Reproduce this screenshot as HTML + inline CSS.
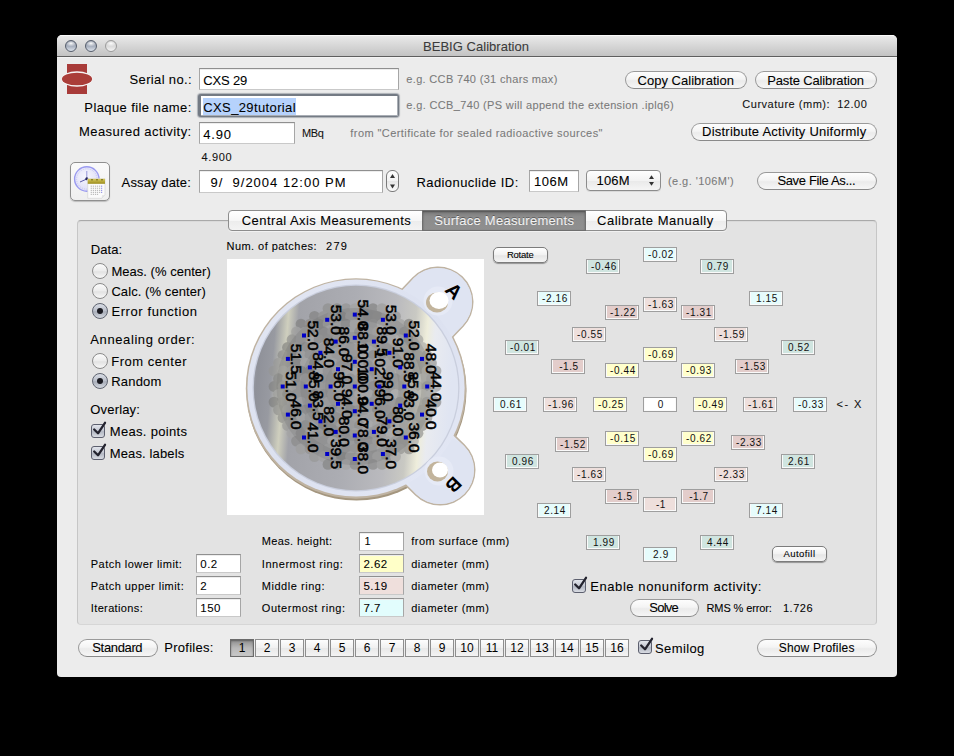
<!DOCTYPE html><html><head><meta charset="utf-8"><style>
body{margin:0;background:#000;width:954px;height:756px;overflow:hidden;position:relative;font-family:"Liberation Sans",sans-serif;}
span{font-family:"Liberation Sans",sans-serif;-webkit-text-stroke:0.08px currentColor;}
.tf{position:absolute;box-sizing:border-box;background:#fff;border:1px solid #a6a6a6;border-top-color:#8f8f8f;border-bottom-color:#c9c9c9;box-shadow:inset 0 1px 0 #ededed;}
.btn{position:absolute;box-sizing:border-box;border:1px solid #9a9a9a;border-bottom-color:#8a8a8a;border-radius:9px;background:linear-gradient(#fdfdfd,#f4f4f4 45%,#ebebeb 55%,#f6f6f6);}
.sbtn{position:absolute;box-sizing:border-box;border:1px solid #7c7c7c;border-radius:5px;background:linear-gradient(#ffffff,#f1f1f1 50%,#e6e6e6 55%,#f4f4f4);box-shadow:0 1px 1px rgba(0,0,0,.35);}
.lb{position:absolute;box-sizing:border-box;width:34px;height:15px;border:1px solid #9e9e9e;box-shadow:inset 1px 0 0 #fafafa,inset -1px -1px 0 #fafafa;font-size:10px;line-height:14px;text-align:center;color:#111;letter-spacing:0.6px;text-indent:1.9px}
.pb{position:absolute;box-sizing:border-box;width:24px;height:18px;top:639px;border:1px solid #8e8e8e;background:linear-gradient(#fdfdfd,#f0f0f0 50%,#e8e8e8 51%,#f4f4f4);font-size:12px;line-height:16px;text-align:center;color:#000}
.rad{position:absolute;box-sizing:border-box;width:16px;height:16px;border-radius:50%;border:1px solid #8a8a8a;background:linear-gradient(#fbfbfb,#ececec 50%,#e2e2e2 55%,#f7f7f7)}
.rads{position:absolute;box-sizing:border-box;width:16px;height:16px;border-radius:50%;border:1px solid #5f6470;background:linear-gradient(#d9dde5,#b9bec9 50%,#a9aeb9 55%,#d3d7df)}
.cb{position:absolute;box-sizing:border-box;width:14px;height:14px;border-radius:3px;border:1px solid #5c5f6e;background:linear-gradient(#e2e5ec,#c3c7d1 50%,#b3b8c3 55%,#d9dce3)}
</style></head><body><div style="position:absolute;left:57px;top:35px;width:840px;height:642px;background:#ececec;border-radius:5px 5px 4px 4px;overflow:hidden"><div style="position:absolute;left:0;top:0;width:840px;height:21px;background:linear-gradient(#e9e9e9,#d6d6d6 50%,#c3c3c3);border-top:1px solid #fbfbfb;box-sizing:border-box"></div><div style="position:absolute;left:0;top:21px;width:840px;height:1px;background:#5e5e5e"></div><div style="position:absolute;left:0;top:22px;width:840px;height:1px;background:#f4f4f4"></div></div>
<div style="position:absolute;left:65px;top:40px;width:12px;height:12px;border-radius:50%;background:radial-gradient(ellipse 55% 32% at 50% 24%, rgba(255,255,255,.95), rgba(255,255,255,0)), linear-gradient(#7f8898, #aab2c0 55%, #dde3ec);border:1px solid #565e6c;box-sizing:border-box"></div>
<div style="position:absolute;left:85px;top:40px;width:12px;height:12px;border-radius:50%;background:radial-gradient(ellipse 55% 32% at 50% 24%, rgba(255,255,255,.95), rgba(255,255,255,0)), linear-gradient(#7f8898, #aab2c0 55%, #dde3ec);border:1px solid #565e6c;box-sizing:border-box"></div>
<div style="position:absolute;left:105px;top:40px;width:12px;height:12px;border-radius:50%;background:radial-gradient(ellipse 55% 32% at 50% 24%, rgba(255,255,255,.95), rgba(255,255,255,0)), linear-gradient(#c4c4c4, #dcdcdc 55%, #f4f4f4);border:1px solid #9c9c9c;box-sizing:border-box"></div>
<span id="t0" style="position:absolute;top:39.60px;font-size:13px;line-height:13px;white-space:pre;color:#3b3b3b;letter-spacing:0.031px;left:423px;">BEBIG Calibration</span>
<svg style="position:absolute;left:57px;top:60px" width="40" height="40"><rect x="10" y="4" width="20" height="30" fill="#a83b39"/><ellipse cx="20" cy="19" rx="15.6" ry="7.8" fill="#f6f6f6"/><ellipse cx="20" cy="19" rx="15.1" ry="6.3" fill="#aa3d39"/></svg>
<span id="t1" style="position:absolute;top:72.90px;font-size:13px;line-height:13px;white-space:pre;color:#000;letter-spacing:0.345px;left:129.6px;">Serial no.:</span>
<span id="t2" style="position:absolute;top:100.60px;font-size:13px;line-height:13px;white-space:pre;color:#000;letter-spacing:0.409px;left:84.3px;">Plaque file name:</span>
<span id="t3" style="position:absolute;top:124.70px;font-size:13px;line-height:13px;white-space:pre;color:#000;letter-spacing:0.437px;left:79px;">Measured activity:</span>
<div class="tf" style="left:199px;top:68px;width:200px;height:22px"></div>
<span id="t4" style="position:absolute;top:74.20px;font-size:13px;line-height:13px;white-space:pre;color:#000;letter-spacing:-0.163px;left:203.3px;">CXS 29</span>
<div style="position:absolute;left:198px;top:94px;width:201px;height:23px;border-radius:3px;background:#737a84;box-shadow:0 0 1px 1px rgba(120,128,138,.55)"></div>
<div style="position:absolute;left:201px;top:96px;width:196px;height:19px;background:#fff;box-shadow:0 0 0.5px 0.5px #a9aeb5"></div>
<div style="position:absolute;left:203px;top:98px;width:93px;height:17px;background:#b6d2fc"></div>
<span id="t5" style="position:absolute;top:101.20px;font-size:13px;line-height:13px;white-space:pre;color:#000;letter-spacing:0.373px;left:203.3px;">CXS_29tutorial</span>
<div class="tf" style="left:199px;top:122px;width:96px;height:22px"></div>
<span id="t6" style="position:absolute;top:128.00px;font-size:13px;line-height:13px;white-space:pre;color:#000;letter-spacing:0.796px;left:203.3px;">4.90</span>
<span id="t7" style="position:absolute;top:127.89px;font-size:11px;line-height:11px;white-space:pre;color:#111;letter-spacing:-0.412px;left:302px;">MBq</span>
<span id="t8" style="position:absolute;top:152.09px;font-size:11px;line-height:11px;white-space:pre;color:#111;letter-spacing:0.642px;left:201.6px;">4.900</span>
<span id="t9" style="position:absolute;top:73.59px;font-size:11px;line-height:11px;white-space:pre;color:#7a7a7a;letter-spacing:0.329px;left:406.3px;">e.g. CCB 740 (31 chars max)</span>
<span id="t10" style="position:absolute;top:100.49px;font-size:11px;line-height:11px;white-space:pre;color:#7a7a7a;letter-spacing:0.353px;left:406.3px;">e.g. CCB_740 (PS will append the extension .iplq6)</span>
<span id="t11" style="position:absolute;top:127.69px;font-size:11px;line-height:11px;white-space:pre;color:#7a7a7a;letter-spacing:0.430px;left:350.3px;">from "Certificate for sealed radioactive sources"</span>
<div class="btn" style="left:625px;top:71px;width:122px;height:18px"></div>
<span id="t12" style="position:absolute;top:73.60px;font-size:13px;line-height:13px;white-space:pre;color:#000;letter-spacing:0.026px;left:637.5px;">Copy Calibration</span>
<div class="btn" style="left:755px;top:71px;width:122px;height:18px"></div>
<span id="t13" style="position:absolute;top:73.60px;font-size:13px;line-height:13px;white-space:pre;color:#000;letter-spacing:-0.138px;left:767.2px;">Paste Calibration</span>
<span id="t14" style="position:absolute;top:98.69px;font-size:11px;line-height:11px;white-space:pre;color:#111;letter-spacing:0.514px;left:742.3px;">Curvature (mm):  12.00</span>
<div class="btn" style="left:691px;top:123px;width:186px;height:18px"></div>
<span id="t15" style="position:absolute;top:125.20px;font-size:13px;line-height:13px;white-space:pre;color:#000;letter-spacing:0.240px;left:702px;">Distribute Activity Uniformly</span>
<div style="position:absolute;left:70px;top:162px;width:40px;height:39px;box-sizing:border-box;border:1px solid #8f8f8f;border-radius:5px;background:linear-gradient(#fafafa,#efefef);box-shadow:0 1px 1px rgba(0,0,0,.2)"><svg width="40" height="39" style="position:absolute;left:-1px;top:-1px"><defs><linearGradient id="calh" x1="0" y1="0" x2="0" y2="1"><stop offset="0" stop-color="#d8cc60"/><stop offset="1" stop-color="#9c8c1c"/></linearGradient><radialGradient id="clf" cx="0.45" cy="0.4" r="0.6"><stop offset="0" stop-color="#f6f6fe"/><stop offset="1" stop-color="#dedef6"/></radialGradient></defs><circle cx="16.8" cy="17" r="12.2" fill="url(#clf)" stroke="#9a9af0" stroke-width="1.4"/><circle cx="16.8" cy="17" r="10.2" fill="none" stroke="#c4c4f4" stroke-width="0.9" stroke-dasharray="1.2 1"/><line x1="16.8" y1="17" x2="16.8" y2="9" stroke="#8c8cd4" stroke-width="0.9"/><line x1="16.8" y1="17" x2="10" y2="20" stroke="#5a5aa8" stroke-width="1"/><circle cx="16.8" cy="16.8" r="1.5" fill="#24245c"/><path d="M17.7 16.8 H35 V33 L31.7 36.3 H17.7 Z" fill="#fbfbfb" stroke="#d0d0d0" stroke-width="0.6"/><path d="M31.7 36.3 L32 33.2 L35 33 Z" fill="#e4e4e4"/><rect x="17.7" y="16.8" width="17.3" height="5" fill="url(#calh)"/><rect x="21" y="17.3" width="2" height="1" fill="#6e6418"/><rect x="26" y="17.3" width="2" height="1" fill="#6e6418"/><rect x="31" y="17.3" width="2" height="1" fill="#6e6418"/><rect x="20.7" y="23.6" width="1.2" height="1.2" fill="#bdbdbd"/><rect x="22.8" y="23.6" width="1.2" height="1.2" fill="#bdbdbd"/><rect x="24.9" y="23.6" width="1.2" height="1.2" fill="#bdbdbd"/><rect x="26.9" y="23.6" width="1.2" height="1.2" fill="#bdbdbd"/><rect x="29.0" y="23.6" width="1.2" height="1.2" fill="#bdbdbd"/><rect x="31.0" y="23.6" width="1.2" height="1.2" fill="#9a9ae8"/><rect x="20.7" y="25.7" width="1.2" height="1.2" fill="#bdbdbd"/><rect x="22.8" y="25.7" width="1.2" height="1.2" fill="#bdbdbd"/><rect x="24.9" y="25.7" width="1.2" height="1.2" fill="#bdbdbd"/><rect x="26.9" y="25.7" width="1.2" height="1.2" fill="#bdbdbd"/><rect x="29.0" y="25.7" width="1.2" height="1.2" fill="#bdbdbd"/><rect x="31.0" y="25.7" width="1.2" height="1.2" fill="#9a9ae8"/><rect x="20.7" y="27.8" width="1.2" height="1.2" fill="#bdbdbd"/><rect x="22.8" y="27.8" width="1.2" height="1.2" fill="#bdbdbd"/><rect x="24.9" y="27.8" width="1.2" height="1.2" fill="#bdbdbd"/><rect x="26.9" y="27.8" width="1.2" height="1.2" fill="#bdbdbd"/><rect x="29.0" y="27.8" width="1.2" height="1.2" fill="#bdbdbd"/><rect x="31.0" y="27.8" width="1.2" height="1.2" fill="#9a9ae8"/><rect x="20.7" y="29.8" width="1.2" height="1.2" fill="#bdbdbd"/><rect x="22.8" y="29.8" width="1.2" height="1.2" fill="#bdbdbd"/><rect x="24.9" y="29.8" width="1.2" height="1.2" fill="#bdbdbd"/><rect x="26.9" y="29.8" width="1.2" height="1.2" fill="#bdbdbd"/><rect x="29.0" y="29.8" width="1.2" height="1.2" fill="#bdbdbd"/><rect x="31.0" y="29.8" width="1.2" height="1.2" fill="#9a9ae8"/><rect x="20.7" y="31.8" width="1.2" height="1.2" fill="#bdbdbd"/><rect x="22.8" y="31.8" width="1.2" height="1.2" fill="#bdbdbd"/><rect x="24.9" y="31.8" width="1.2" height="1.2" fill="#bdbdbd"/><rect x="26.9" y="31.8" width="1.2" height="1.2" fill="#bdbdbd"/></svg></div>
<span id="t16" style="position:absolute;top:176.20px;font-size:13px;line-height:13px;white-space:pre;color:#000;letter-spacing:0.126px;left:121.6px;">Assay date:</span>
<div class="tf" style="left:199px;top:170px;width:184px;height:23px"></div>
<span id="t17" style="position:absolute;top:176.00px;font-size:13px;line-height:13px;white-space:pre;color:#000;letter-spacing:0.995px;left:210.5px;">9/  9/2004 12:00 PM</span>
<div style="position:absolute;left:386px;top:170px;width:13px;height:22px;box-sizing:border-box;border:1px solid #7a7a7a;border-radius:6px;background:linear-gradient(#fdfdfd,#f2f2f2 50%,#e6e6e6 52%,#fafafa)"><svg width="13" height="22" style="position:absolute;left:-1px;top:-1px"><path d="M4 8 L6.5 4 L9 8 Z" fill="#333"/><path d="M4 14.5 L6.5 18.5 L9 14.5 Z" fill="#333"/></svg></div>
<span id="t18" style="position:absolute;top:176.00px;font-size:13px;line-height:13px;white-space:pre;color:#000;letter-spacing:0.434px;left:416.4px;">Radionuclide ID:</span>
<div class="tf" style="left:529px;top:170px;width:50px;height:22px"></div>
<span id="t19" style="position:absolute;top:175.20px;font-size:13px;line-height:13px;white-space:pre;color:#000;letter-spacing:0.556px;left:534px;">106M</span>
<div style="position:absolute;left:586px;top:170px;width:75px;height:21px;box-sizing:border-box;border:1px solid #8c8c8c;border-radius:4px;background:linear-gradient(#fefefe,#f3f3f3 50%,#e9e9e9 52%,#f5f5f5);box-shadow:0 1px 0 rgba(0,0,0,.08)"><svg width="75" height="21" style="position:absolute;left:-1px;top:-1px"><path d="M63 9 L65.5 5.3 L68 9 Z" fill="#333"/><path d="M63 12 L65.5 15.7 L68 12 Z" fill="#333"/></svg></div>
<span id="t20" style="position:absolute;top:174.00px;font-size:13px;line-height:13px;white-space:pre;color:#000;letter-spacing:0.156px;left:596.5px;">106M</span>
<span id="t21" style="position:absolute;top:175.89px;font-size:11px;line-height:11px;white-space:pre;color:#7a7a7a;letter-spacing:0.429px;left:668px;">(e.g. '106M')</span>
<div class="btn" style="left:757px;top:172px;width:120px;height:18px"></div>
<span id="t22" style="position:absolute;top:173.80px;font-size:13px;line-height:13px;white-space:pre;color:#000;letter-spacing:-0.350px;left:777.4px;">Save File As...</span>
<div style="position:absolute;left:77px;top:220px;width:800px;height:405px;box-sizing:border-box;border:1px solid #c6c6c6;border-top-color:#a9a9a9;border-bottom-color:#d6d6d6;border-radius:4px;background:#e3e3e3;box-shadow:inset 0 1px 0 #dadada"></div>
<div style="position:absolute;left:228px;top:210px;width:499px;height:21px;box-sizing:border-box;border:1px solid #8d8d8d;border-radius:4px;background:linear-gradient(#ffffff,#f6f6f6 50%,#ececec 52%,#f3f3f3);box-shadow:0 1px 0 rgba(255,255,255,.5)"></div>
<div style="position:absolute;left:422px;top:210px;width:164px;height:21px;box-sizing:border-box;border:1px solid #6f6f6f;background:linear-gradient(#7a7a7a,#8c8c8c 30%,#8f8f8f);box-shadow:inset 0 1px 2px rgba(0,0,0,.35)"></div>
<span id="t23" style="position:absolute;top:213.60px;font-size:13px;line-height:13px;white-space:pre;color:#000;letter-spacing:0.414px;left:241.8px;">Central Axis Measurements</span>
<span id="t24" style="position:absolute;top:213.90px;font-size:13px;line-height:13px;white-space:pre;color:#f2f2f2;letter-spacing:0.284px;left:434.2px;text-shadow:0 -1px 0 rgba(0,0,0,.35)">Surface Measurements</span>
<span id="t25" style="position:absolute;top:213.60px;font-size:13px;line-height:13px;white-space:pre;color:#000;letter-spacing:0.496px;left:597.1px;">Calibrate Manually</span>
<span id="t26" style="position:absolute;top:242.90px;font-size:13px;line-height:13px;white-space:pre;color:#000;letter-spacing:0.080px;left:90.7px;">Data:</span>
<div class="rad" style="left:92px;top:263px"></div>
<span id="t27" style="position:absolute;top:265.20px;font-size:13px;line-height:13px;white-space:pre;color:#000;letter-spacing:0.028px;left:111.4px;">Meas. (% center)</span>
<div class="rad" style="left:92px;top:283px"></div>
<span id="t28" style="position:absolute;top:285.20px;font-size:13px;line-height:13px;white-space:pre;color:#000;letter-spacing:0.080px;left:111.4px;">Calc. (% center)</span>
<div class="rads" style="left:92px;top:303px"></div>
<div style="position:absolute;left:97px;top:308px;width:6px;height:6px;border-radius:50%;background:#1b1b22"></div>
<span id="t29" style="position:absolute;top:305.20px;font-size:13px;line-height:13px;white-space:pre;color:#000;letter-spacing:0.589px;left:111.4px;">Error function</span>
<span id="t30" style="position:absolute;top:332.80px;font-size:13px;line-height:13px;white-space:pre;color:#000;letter-spacing:0.600px;left:90.3px;">Annealing order:</span>
<div class="rad" style="left:92px;top:353px"></div>
<span id="t31" style="position:absolute;top:355.00px;font-size:13px;line-height:13px;white-space:pre;color:#000;letter-spacing:0.512px;left:111.3px;">From center</span>
<div class="rads" style="left:92px;top:373px"></div>
<div style="position:absolute;left:97px;top:378px;width:6px;height:6px;border-radius:50%;background:#1b1b22"></div>
<span id="t32" style="position:absolute;top:375.00px;font-size:13px;line-height:13px;white-space:pre;color:#000;letter-spacing:0.172px;left:111.3px;">Random</span>
<span id="t33" style="position:absolute;top:402.70px;font-size:13px;line-height:13px;white-space:pre;color:#000;letter-spacing:0.171px;left:90.3px;">Overlay:</span>
<div class="cb" style="left:91px;top:424px"></div>
<svg style="position:absolute;left:88px;top:418px" width="22" height="22"><path d="M6.2 11.5 L10 15.3 L17 4.8" fill="none" stroke="#23232e" stroke-width="2.3" stroke-linecap="round" stroke-linejoin="round"/></svg>
<span id="t34" style="position:absolute;top:424.50px;font-size:13px;line-height:13px;white-space:pre;color:#000;letter-spacing:0.318px;left:109.8px;">Meas. points</span>
<div class="cb" style="left:91px;top:446px"></div>
<svg style="position:absolute;left:88px;top:440px" width="22" height="22"><path d="M6.2 11.5 L10 15.3 L17 4.8" fill="none" stroke="#23232e" stroke-width="2.3" stroke-linecap="round" stroke-linejoin="round"/></svg>
<span id="t35" style="position:absolute;top:446.50px;font-size:13px;line-height:13px;white-space:pre;color:#000;letter-spacing:0.129px;left:109.8px;">Meas. labels</span>
<span id="t36" style="position:absolute;top:240.99px;font-size:11px;line-height:11px;white-space:pre;color:#000;letter-spacing:0.456px;left:226.5px;">Num. of patches:</span>
<span id="t37" style="position:absolute;top:240.99px;font-size:11px;line-height:11px;white-space:pre;color:#000;letter-spacing:1.220px;left:326.1px;">279</span>
<svg style="position:absolute;left:227px;top:259px" width="257" height="256" viewBox="0 0 257 256"><defs><linearGradient id="disc" x1="0" y1="0" x2="1" y2="0.08"><stop offset="0" stop-color="#aaadb9"/><stop offset="0.05" stop-color="#8f9199"/><stop offset="0.12" stop-color="#989aa1"/><stop offset="0.18" stop-color="#cfcfbe"/><stop offset="0.23" stop-color="#a2a3a9"/><stop offset="0.5" stop-color="#acadb3"/><stop offset="0.7" stop-color="#bababe"/><stop offset="0.8" stop-color="#c9c9c3"/><stop offset="0.86" stop-color="#eeeddb"/><stop offset="0.9" stop-color="#e9ebf0"/><stop offset="1" stop-color="#e0e5f2"/></linearGradient><linearGradient id="rim" x1="0" y1="0" x2="1" y2="1"><stop offset="0" stop-color="#e3e7f3"/><stop offset="0.5" stop-color="#dce1f0"/><stop offset="1" stop-color="#e4e8f5"/></linearGradient></defs><rect width="257" height="256" fill="#ffffff"/><circle cx="129.5" cy="131.5" r="110" fill="#a4967f"/><circle cx="129" cy="129.5" r="110.2" fill="#bfb3a2"/><line x1="129" y1="129" x2="211" y2="43" stroke="#bfb3a2" stroke-width="71" stroke-linecap="round"/><line x1="129" y1="129" x2="213" y2="211" stroke="#bfb3a2" stroke-width="71" stroke-linecap="round"/><line x1="129" y1="129" x2="211" y2="43" stroke="url(#rim)" stroke-width="68" stroke-linecap="round"/><line x1="129" y1="129" x2="213" y2="211" stroke="url(#rim)" stroke-width="68" stroke-linecap="round"/><circle cx="211" cy="43" r="34" fill="#dfe4f2"/><circle cx="213" cy="211" r="34" fill="#dfe4f2"/><circle cx="129" cy="129" r="108.6" fill="url(#rim)"/><circle cx="129" cy="129" r="103.5" fill="#c9cedd"/><circle cx="129" cy="129" r="102.2" fill="url(#disc)"/><circle cx="211" cy="42" r="14.5" fill="#e6eaf6"/><ellipse cx="210" cy="43.5" rx="11" ry="10" fill="#c2b49c"/><ellipse cx="212" cy="41.5" rx="9.5" ry="8.5" fill="#ffffff"/><circle cx="212" cy="212" r="14.5" fill="#e6eaf6"/><ellipse cx="210.5" cy="212.5" rx="10.5" ry="10" fill="#c2b49c"/><ellipse cx="213" cy="211" rx="8" ry="7.5" fill="#ffffff"/><text x="0" y="0" transform="translate(227,32) rotate(45)" text-anchor="middle" dominant-baseline="central" font-family="Liberation Sans" font-weight="bold" font-size="20" fill="#000">A</text><text x="0" y="0" transform="translate(226.6,225.6) rotate(135)" text-anchor="middle" dominant-baseline="central" font-family="Liberation Sans" font-weight="bold" font-size="19" fill="#000">B</text><g opacity="0.6"><circle cx="101.0" cy="49.6" r="5.4" fill="rgb(140,140,138)"/><circle cx="110.0" cy="49.6" r="5.4" fill="rgb(129,129,127)"/><circle cx="119.0" cy="49.6" r="5.4" fill="rgb(145,145,143)"/><circle cx="128.0" cy="49.6" r="5.4" fill="rgb(161,161,159)"/><circle cx="137.0" cy="49.6" r="5.4" fill="rgb(123,123,121)"/><circle cx="146.0" cy="49.6" r="5.4" fill="rgb(124,124,122)"/><circle cx="155.0" cy="49.6" r="5.4" fill="rgb(154,154,152)"/><circle cx="87.5" cy="57.4" r="5.4" fill="rgb(126,126,124)"/><circle cx="96.5" cy="57.4" r="5.4" fill="rgb(143,143,141)"/><circle cx="105.5" cy="57.4" r="5.4" fill="rgb(157,157,155)"/><circle cx="114.5" cy="57.4" r="5.4" fill="rgb(123,123,121)"/><circle cx="123.5" cy="57.4" r="5.4" fill="rgb(152,152,150)"/><circle cx="132.5" cy="57.4" r="5.4" fill="rgb(133,133,131)"/><circle cx="141.5" cy="57.4" r="5.4" fill="rgb(122,122,120)"/><circle cx="150.5" cy="57.4" r="5.4" fill="rgb(125,125,123)"/><circle cx="159.5" cy="57.4" r="5.4" fill="rgb(147,147,145)"/><circle cx="168.5" cy="57.4" r="5.4" fill="rgb(146,146,144)"/><circle cx="74.0" cy="65.1" r="5.4" fill="rgb(124,124,122)"/><circle cx="83.0" cy="65.1" r="5.4" fill="rgb(135,135,133)"/><circle cx="92.0" cy="65.1" r="5.4" fill="rgb(125,125,123)"/><circle cx="101.0" cy="65.1" r="5.4" fill="rgb(155,155,153)"/><circle cx="110.0" cy="65.1" r="5.4" fill="rgb(147,147,145)"/><circle cx="119.0" cy="65.1" r="5.4" fill="rgb(123,123,121)"/><circle cx="128.0" cy="65.1" r="5.4" fill="rgb(156,156,154)"/><circle cx="137.0" cy="65.1" r="5.4" fill="rgb(127,127,125)"/><circle cx="146.0" cy="65.1" r="5.4" fill="rgb(134,134,132)"/><circle cx="155.0" cy="65.1" r="5.4" fill="rgb(160,160,158)"/><circle cx="164.0" cy="65.1" r="5.4" fill="rgb(160,160,158)"/><circle cx="173.0" cy="65.1" r="5.4" fill="rgb(157,157,155)"/><circle cx="182.0" cy="65.1" r="5.4" fill="rgb(123,123,121)"/><circle cx="69.5" cy="72.9" r="5.4" fill="rgb(156,156,154)"/><circle cx="78.5" cy="72.9" r="5.4" fill="rgb(157,157,155)"/><circle cx="87.5" cy="72.9" r="5.4" fill="rgb(145,145,143)"/><circle cx="96.5" cy="72.9" r="5.4" fill="rgb(123,123,121)"/><circle cx="105.5" cy="72.9" r="5.4" fill="rgb(134,134,132)"/><circle cx="114.5" cy="72.9" r="5.4" fill="rgb(122,122,120)"/><circle cx="123.5" cy="72.9" r="5.4" fill="rgb(155,155,153)"/><circle cx="132.5" cy="72.9" r="5.4" fill="rgb(128,128,126)"/><circle cx="141.5" cy="72.9" r="5.4" fill="rgb(138,138,136)"/><circle cx="150.5" cy="72.9" r="5.4" fill="rgb(146,146,144)"/><circle cx="159.5" cy="72.9" r="5.4" fill="rgb(129,129,127)"/><circle cx="168.5" cy="72.9" r="5.4" fill="rgb(154,154,152)"/><circle cx="177.5" cy="72.9" r="5.4" fill="rgb(127,127,125)"/><circle cx="186.5" cy="72.9" r="5.4" fill="rgb(156,156,154)"/><circle cx="65.0" cy="80.7" r="5.4" fill="rgb(139,139,137)"/><circle cx="74.0" cy="80.7" r="5.4" fill="rgb(155,155,153)"/><circle cx="83.0" cy="80.7" r="5.4" fill="rgb(163,163,161)"/><circle cx="92.0" cy="80.7" r="5.4" fill="rgb(131,131,129)"/><circle cx="101.0" cy="80.7" r="5.4" fill="rgb(126,126,124)"/><circle cx="110.0" cy="80.7" r="5.4" fill="rgb(157,157,155)"/><circle cx="119.0" cy="80.7" r="5.4" fill="rgb(156,156,154)"/><circle cx="128.0" cy="80.7" r="5.4" fill="rgb(160,160,158)"/><circle cx="137.0" cy="80.7" r="5.4" fill="rgb(132,132,130)"/><circle cx="146.0" cy="80.7" r="5.4" fill="rgb(143,143,141)"/><circle cx="155.0" cy="80.7" r="5.4" fill="rgb(126,126,124)"/><circle cx="164.0" cy="80.7" r="5.4" fill="rgb(155,155,153)"/><circle cx="173.0" cy="80.7" r="5.4" fill="rgb(165,165,163)"/><circle cx="182.0" cy="80.7" r="5.4" fill="rgb(124,124,122)"/><circle cx="191.0" cy="80.7" r="5.4" fill="rgb(156,156,154)"/><circle cx="60.5" cy="88.5" r="5.4" fill="rgb(123,123,121)"/><circle cx="69.5" cy="88.5" r="5.4" fill="rgb(159,159,157)"/><circle cx="78.5" cy="88.5" r="5.4" fill="rgb(133,133,131)"/><circle cx="87.5" cy="88.5" r="5.4" fill="rgb(151,151,149)"/><circle cx="96.5" cy="88.5" r="5.4" fill="rgb(163,163,161)"/><circle cx="105.5" cy="88.5" r="5.4" fill="rgb(154,154,152)"/><circle cx="114.5" cy="88.5" r="5.4" fill="rgb(147,147,145)"/><circle cx="123.5" cy="88.5" r="5.4" fill="rgb(140,140,138)"/><circle cx="132.5" cy="88.5" r="5.4" fill="rgb(149,149,147)"/><circle cx="141.5" cy="88.5" r="5.4" fill="rgb(157,157,155)"/><circle cx="150.5" cy="88.5" r="5.4" fill="rgb(149,149,147)"/><circle cx="159.5" cy="88.5" r="5.4" fill="rgb(143,143,141)"/><circle cx="168.5" cy="88.5" r="5.4" fill="rgb(139,139,137)"/><circle cx="177.5" cy="88.5" r="5.4" fill="rgb(135,135,133)"/><circle cx="186.5" cy="88.5" r="5.4" fill="rgb(131,131,129)"/><circle cx="195.5" cy="88.5" r="5.4" fill="rgb(164,164,162)"/><circle cx="56.0" cy="96.3" r="5.4" fill="rgb(135,135,133)"/><circle cx="65.0" cy="96.3" r="5.4" fill="rgb(125,125,123)"/><circle cx="74.0" cy="96.3" r="5.4" fill="rgb(156,156,154)"/><circle cx="83.0" cy="96.3" r="5.4" fill="rgb(139,139,137)"/><circle cx="92.0" cy="96.3" r="5.4" fill="rgb(153,153,151)"/><circle cx="101.0" cy="96.3" r="5.4" fill="rgb(151,151,149)"/><circle cx="110.0" cy="96.3" r="5.4" fill="rgb(141,141,139)"/><circle cx="119.0" cy="96.3" r="5.4" fill="rgb(148,148,146)"/><circle cx="128.0" cy="96.3" r="5.4" fill="rgb(138,138,136)"/><circle cx="137.0" cy="96.3" r="5.4" fill="rgb(158,158,156)"/><circle cx="146.0" cy="96.3" r="5.4" fill="rgb(124,124,122)"/><circle cx="155.0" cy="96.3" r="5.4" fill="rgb(127,127,125)"/><circle cx="164.0" cy="96.3" r="5.4" fill="rgb(152,152,150)"/><circle cx="173.0" cy="96.3" r="5.4" fill="rgb(146,146,144)"/><circle cx="182.0" cy="96.3" r="5.4" fill="rgb(130,130,128)"/><circle cx="191.0" cy="96.3" r="5.4" fill="rgb(141,141,139)"/><circle cx="200.0" cy="96.3" r="5.4" fill="rgb(129,129,127)"/><circle cx="51.5" cy="104.1" r="5.4" fill="rgb(151,151,149)"/><circle cx="60.5" cy="104.1" r="5.4" fill="rgb(146,146,144)"/><circle cx="69.5" cy="104.1" r="5.4" fill="rgb(122,122,120)"/><circle cx="78.5" cy="104.1" r="5.4" fill="rgb(162,162,160)"/><circle cx="87.5" cy="104.1" r="5.4" fill="rgb(124,124,122)"/><circle cx="96.5" cy="104.1" r="5.4" fill="rgb(155,155,153)"/><circle cx="105.5" cy="104.1" r="5.4" fill="rgb(156,156,154)"/><circle cx="114.5" cy="104.1" r="5.4" fill="rgb(140,140,138)"/><circle cx="123.5" cy="104.1" r="5.4" fill="rgb(141,141,139)"/><circle cx="132.5" cy="104.1" r="5.4" fill="rgb(164,164,162)"/><circle cx="141.5" cy="104.1" r="5.4" fill="rgb(142,142,140)"/><circle cx="150.5" cy="104.1" r="5.4" fill="rgb(158,158,156)"/><circle cx="159.5" cy="104.1" r="5.4" fill="rgb(151,151,149)"/><circle cx="168.5" cy="104.1" r="5.4" fill="rgb(157,157,155)"/><circle cx="177.5" cy="104.1" r="5.4" fill="rgb(149,149,147)"/><circle cx="186.5" cy="104.1" r="5.4" fill="rgb(124,124,122)"/><circle cx="195.5" cy="104.1" r="5.4" fill="rgb(125,125,123)"/><circle cx="204.5" cy="104.1" r="5.4" fill="rgb(137,137,135)"/><circle cx="47.0" cy="111.9" r="5.4" fill="rgb(150,150,148)"/><circle cx="56.0" cy="111.9" r="5.4" fill="rgb(164,164,162)"/><circle cx="65.0" cy="111.9" r="5.4" fill="rgb(162,162,160)"/><circle cx="74.0" cy="111.9" r="5.4" fill="rgb(124,124,122)"/><circle cx="83.0" cy="111.9" r="5.4" fill="rgb(123,123,121)"/><circle cx="92.0" cy="111.9" r="5.4" fill="rgb(164,164,162)"/><circle cx="101.0" cy="111.9" r="5.4" fill="rgb(139,139,137)"/><circle cx="110.0" cy="111.9" r="5.4" fill="rgb(161,161,159)"/><circle cx="119.0" cy="111.9" r="5.4" fill="rgb(156,156,154)"/><circle cx="128.0" cy="111.9" r="5.4" fill="rgb(163,163,161)"/><circle cx="137.0" cy="111.9" r="5.4" fill="rgb(148,148,146)"/><circle cx="146.0" cy="111.9" r="5.4" fill="rgb(138,138,136)"/><circle cx="155.0" cy="111.9" r="5.4" fill="rgb(165,165,163)"/><circle cx="164.0" cy="111.9" r="5.4" fill="rgb(144,144,142)"/><circle cx="173.0" cy="111.9" r="5.4" fill="rgb(162,162,160)"/><circle cx="182.0" cy="111.9" r="5.4" fill="rgb(142,142,140)"/><circle cx="191.0" cy="111.9" r="5.4" fill="rgb(121,121,119)"/><circle cx="200.0" cy="111.9" r="5.4" fill="rgb(149,149,147)"/><circle cx="209.0" cy="111.9" r="5.4" fill="rgb(142,142,140)"/><circle cx="51.5" cy="119.7" r="5.4" fill="rgb(130,130,128)"/><circle cx="60.5" cy="119.7" r="5.4" fill="rgb(159,159,157)"/><circle cx="69.5" cy="119.7" r="5.4" fill="rgb(127,127,125)"/><circle cx="78.5" cy="119.7" r="5.4" fill="rgb(151,151,149)"/><circle cx="87.5" cy="119.7" r="5.4" fill="rgb(123,123,121)"/><circle cx="96.5" cy="119.7" r="5.4" fill="rgb(133,133,131)"/><circle cx="105.5" cy="119.7" r="5.4" fill="rgb(138,138,136)"/><circle cx="114.5" cy="119.7" r="5.4" fill="rgb(128,128,126)"/><circle cx="123.5" cy="119.7" r="5.4" fill="rgb(135,135,133)"/><circle cx="132.5" cy="119.7" r="5.4" fill="rgb(145,145,143)"/><circle cx="141.5" cy="119.7" r="5.4" fill="rgb(145,145,143)"/><circle cx="150.5" cy="119.7" r="5.4" fill="rgb(151,151,149)"/><circle cx="159.5" cy="119.7" r="5.4" fill="rgb(125,125,123)"/><circle cx="168.5" cy="119.7" r="5.4" fill="rgb(130,130,128)"/><circle cx="177.5" cy="119.7" r="5.4" fill="rgb(148,148,146)"/><circle cx="186.5" cy="119.7" r="5.4" fill="rgb(145,145,143)"/><circle cx="195.5" cy="119.7" r="5.4" fill="rgb(155,155,153)"/><circle cx="204.5" cy="119.7" r="5.4" fill="rgb(137,137,135)"/><circle cx="47.0" cy="127.5" r="5.4" fill="rgb(128,128,126)"/><circle cx="56.0" cy="127.5" r="5.4" fill="rgb(147,147,145)"/><circle cx="65.0" cy="127.5" r="5.4" fill="rgb(155,155,153)"/><circle cx="74.0" cy="127.5" r="5.4" fill="rgb(137,137,135)"/><circle cx="83.0" cy="127.5" r="5.4" fill="rgb(165,165,163)"/><circle cx="92.0" cy="127.5" r="5.4" fill="rgb(146,146,144)"/><circle cx="101.0" cy="127.5" r="5.4" fill="rgb(142,142,140)"/><circle cx="110.0" cy="127.5" r="5.4" fill="rgb(163,163,161)"/><circle cx="119.0" cy="127.5" r="5.4" fill="rgb(144,144,142)"/><circle cx="128.0" cy="127.5" r="5.4" fill="rgb(134,134,132)"/><circle cx="137.0" cy="127.5" r="5.4" fill="rgb(129,129,127)"/><circle cx="146.0" cy="127.5" r="5.4" fill="rgb(125,125,123)"/><circle cx="155.0" cy="127.5" r="5.4" fill="rgb(131,131,129)"/><circle cx="164.0" cy="127.5" r="5.4" fill="rgb(129,129,127)"/><circle cx="173.0" cy="127.5" r="5.4" fill="rgb(134,134,132)"/><circle cx="182.0" cy="127.5" r="5.4" fill="rgb(162,162,160)"/><circle cx="191.0" cy="127.5" r="5.4" fill="rgb(134,134,132)"/><circle cx="200.0" cy="127.5" r="5.4" fill="rgb(120,120,118)"/><circle cx="209.0" cy="127.5" r="5.4" fill="rgb(151,151,149)"/><circle cx="51.5" cy="135.3" r="5.4" fill="rgb(157,157,155)"/><circle cx="60.5" cy="135.3" r="5.4" fill="rgb(131,131,129)"/><circle cx="69.5" cy="135.3" r="5.4" fill="rgb(136,136,134)"/><circle cx="78.5" cy="135.3" r="5.4" fill="rgb(138,138,136)"/><circle cx="87.5" cy="135.3" r="5.4" fill="rgb(120,120,118)"/><circle cx="96.5" cy="135.3" r="5.4" fill="rgb(129,129,127)"/><circle cx="105.5" cy="135.3" r="5.4" fill="rgb(146,146,144)"/><circle cx="114.5" cy="135.3" r="5.4" fill="rgb(154,154,152)"/><circle cx="123.5" cy="135.3" r="5.4" fill="rgb(143,143,141)"/><circle cx="132.5" cy="135.3" r="5.4" fill="rgb(159,159,157)"/><circle cx="141.5" cy="135.3" r="5.4" fill="rgb(156,156,154)"/><circle cx="150.5" cy="135.3" r="5.4" fill="rgb(140,140,138)"/><circle cx="159.5" cy="135.3" r="5.4" fill="rgb(128,128,126)"/><circle cx="168.5" cy="135.3" r="5.4" fill="rgb(164,164,162)"/><circle cx="177.5" cy="135.3" r="5.4" fill="rgb(152,152,150)"/><circle cx="186.5" cy="135.3" r="5.4" fill="rgb(159,159,157)"/><circle cx="195.5" cy="135.3" r="5.4" fill="rgb(161,161,159)"/><circle cx="204.5" cy="135.3" r="5.4" fill="rgb(163,163,161)"/><circle cx="47.0" cy="143.1" r="5.4" fill="rgb(123,123,121)"/><circle cx="56.0" cy="143.1" r="5.4" fill="rgb(149,149,147)"/><circle cx="65.0" cy="143.1" r="5.4" fill="rgb(163,163,161)"/><circle cx="74.0" cy="143.1" r="5.4" fill="rgb(155,155,153)"/><circle cx="83.0" cy="143.1" r="5.4" fill="rgb(145,145,143)"/><circle cx="92.0" cy="143.1" r="5.4" fill="rgb(145,145,143)"/><circle cx="101.0" cy="143.1" r="5.4" fill="rgb(145,145,143)"/><circle cx="110.0" cy="143.1" r="5.4" fill="rgb(145,145,143)"/><circle cx="119.0" cy="143.1" r="5.4" fill="rgb(126,126,124)"/><circle cx="128.0" cy="143.1" r="5.4" fill="rgb(150,150,148)"/><circle cx="137.0" cy="143.1" r="5.4" fill="rgb(160,160,158)"/><circle cx="146.0" cy="143.1" r="5.4" fill="rgb(145,145,143)"/><circle cx="155.0" cy="143.1" r="5.4" fill="rgb(123,123,121)"/><circle cx="164.0" cy="143.1" r="5.4" fill="rgb(132,132,130)"/><circle cx="173.0" cy="143.1" r="5.4" fill="rgb(124,124,122)"/><circle cx="182.0" cy="143.1" r="5.4" fill="rgb(133,133,131)"/><circle cx="191.0" cy="143.1" r="5.4" fill="rgb(148,148,146)"/><circle cx="200.0" cy="143.1" r="5.4" fill="rgb(130,130,128)"/><circle cx="209.0" cy="143.1" r="5.4" fill="rgb(127,127,125)"/><circle cx="51.5" cy="150.9" r="5.4" fill="rgb(141,141,139)"/><circle cx="60.5" cy="150.9" r="5.4" fill="rgb(158,158,156)"/><circle cx="69.5" cy="150.9" r="5.4" fill="rgb(123,123,121)"/><circle cx="78.5" cy="150.9" r="5.4" fill="rgb(126,126,124)"/><circle cx="87.5" cy="150.9" r="5.4" fill="rgb(120,120,118)"/><circle cx="96.5" cy="150.9" r="5.4" fill="rgb(156,156,154)"/><circle cx="105.5" cy="150.9" r="5.4" fill="rgb(129,129,127)"/><circle cx="114.5" cy="150.9" r="5.4" fill="rgb(154,154,152)"/><circle cx="123.5" cy="150.9" r="5.4" fill="rgb(126,126,124)"/><circle cx="132.5" cy="150.9" r="5.4" fill="rgb(143,143,141)"/><circle cx="141.5" cy="150.9" r="5.4" fill="rgb(159,159,157)"/><circle cx="150.5" cy="150.9" r="5.4" fill="rgb(121,121,119)"/><circle cx="159.5" cy="150.9" r="5.4" fill="rgb(124,124,122)"/><circle cx="168.5" cy="150.9" r="5.4" fill="rgb(133,133,131)"/><circle cx="177.5" cy="150.9" r="5.4" fill="rgb(159,159,157)"/><circle cx="186.5" cy="150.9" r="5.4" fill="rgb(144,144,142)"/><circle cx="195.5" cy="150.9" r="5.4" fill="rgb(129,129,127)"/><circle cx="204.5" cy="150.9" r="5.4" fill="rgb(160,160,158)"/><circle cx="56.0" cy="158.7" r="5.4" fill="rgb(136,136,134)"/><circle cx="65.0" cy="158.7" r="5.4" fill="rgb(142,142,140)"/><circle cx="74.0" cy="158.7" r="5.4" fill="rgb(158,158,156)"/><circle cx="83.0" cy="158.7" r="5.4" fill="rgb(143,143,141)"/><circle cx="92.0" cy="158.7" r="5.4" fill="rgb(150,150,148)"/><circle cx="101.0" cy="158.7" r="5.4" fill="rgb(127,127,125)"/><circle cx="110.0" cy="158.7" r="5.4" fill="rgb(127,127,125)"/><circle cx="119.0" cy="158.7" r="5.4" fill="rgb(151,151,149)"/><circle cx="128.0" cy="158.7" r="5.4" fill="rgb(149,149,147)"/><circle cx="137.0" cy="158.7" r="5.4" fill="rgb(150,150,148)"/><circle cx="146.0" cy="158.7" r="5.4" fill="rgb(150,150,148)"/><circle cx="155.0" cy="158.7" r="5.4" fill="rgb(139,139,137)"/><circle cx="164.0" cy="158.7" r="5.4" fill="rgb(125,125,123)"/><circle cx="173.0" cy="158.7" r="5.4" fill="rgb(129,129,127)"/><circle cx="182.0" cy="158.7" r="5.4" fill="rgb(126,126,124)"/><circle cx="191.0" cy="158.7" r="5.4" fill="rgb(141,141,139)"/><circle cx="200.0" cy="158.7" r="5.4" fill="rgb(136,136,134)"/><circle cx="60.5" cy="166.5" r="5.4" fill="rgb(150,150,148)"/><circle cx="69.5" cy="166.5" r="5.4" fill="rgb(164,164,162)"/><circle cx="78.5" cy="166.5" r="5.4" fill="rgb(130,130,128)"/><circle cx="87.5" cy="166.5" r="5.4" fill="rgb(153,153,151)"/><circle cx="96.5" cy="166.5" r="5.4" fill="rgb(121,121,119)"/><circle cx="105.5" cy="166.5" r="5.4" fill="rgb(133,133,131)"/><circle cx="114.5" cy="166.5" r="5.4" fill="rgb(153,153,151)"/><circle cx="123.5" cy="166.5" r="5.4" fill="rgb(143,143,141)"/><circle cx="132.5" cy="166.5" r="5.4" fill="rgb(129,129,127)"/><circle cx="141.5" cy="166.5" r="5.4" fill="rgb(164,164,162)"/><circle cx="150.5" cy="166.5" r="5.4" fill="rgb(154,154,152)"/><circle cx="159.5" cy="166.5" r="5.4" fill="rgb(121,121,119)"/><circle cx="168.5" cy="166.5" r="5.4" fill="rgb(153,153,151)"/><circle cx="177.5" cy="166.5" r="5.4" fill="rgb(139,139,137)"/><circle cx="186.5" cy="166.5" r="5.4" fill="rgb(161,161,159)"/><circle cx="195.5" cy="166.5" r="5.4" fill="rgb(125,125,123)"/><circle cx="65.0" cy="174.3" r="5.4" fill="rgb(164,164,162)"/><circle cx="74.0" cy="174.3" r="5.4" fill="rgb(136,136,134)"/><circle cx="83.0" cy="174.3" r="5.4" fill="rgb(153,153,151)"/><circle cx="92.0" cy="174.3" r="5.4" fill="rgb(143,143,141)"/><circle cx="101.0" cy="174.3" r="5.4" fill="rgb(130,130,128)"/><circle cx="110.0" cy="174.3" r="5.4" fill="rgb(142,142,140)"/><circle cx="119.0" cy="174.3" r="5.4" fill="rgb(134,134,132)"/><circle cx="128.0" cy="174.3" r="5.4" fill="rgb(154,154,152)"/><circle cx="137.0" cy="174.3" r="5.4" fill="rgb(154,154,152)"/><circle cx="146.0" cy="174.3" r="5.4" fill="rgb(152,152,150)"/><circle cx="155.0" cy="174.3" r="5.4" fill="rgb(141,141,139)"/><circle cx="164.0" cy="174.3" r="5.4" fill="rgb(160,160,158)"/><circle cx="173.0" cy="174.3" r="5.4" fill="rgb(134,134,132)"/><circle cx="182.0" cy="174.3" r="5.4" fill="rgb(159,159,157)"/><circle cx="191.0" cy="174.3" r="5.4" fill="rgb(132,132,130)"/><circle cx="69.5" cy="182.1" r="5.4" fill="rgb(135,135,133)"/><circle cx="78.5" cy="182.1" r="5.4" fill="rgb(145,145,143)"/><circle cx="87.5" cy="182.1" r="5.4" fill="rgb(134,134,132)"/><circle cx="96.5" cy="182.1" r="5.4" fill="rgb(132,132,130)"/><circle cx="105.5" cy="182.1" r="5.4" fill="rgb(153,153,151)"/><circle cx="114.5" cy="182.1" r="5.4" fill="rgb(151,151,149)"/><circle cx="123.5" cy="182.1" r="5.4" fill="rgb(142,142,140)"/><circle cx="132.5" cy="182.1" r="5.4" fill="rgb(121,121,119)"/><circle cx="141.5" cy="182.1" r="5.4" fill="rgb(121,121,119)"/><circle cx="150.5" cy="182.1" r="5.4" fill="rgb(137,137,135)"/><circle cx="159.5" cy="182.1" r="5.4" fill="rgb(150,150,148)"/><circle cx="168.5" cy="182.1" r="5.4" fill="rgb(136,136,134)"/><circle cx="177.5" cy="182.1" r="5.4" fill="rgb(132,132,130)"/><circle cx="186.5" cy="182.1" r="5.4" fill="rgb(164,164,162)"/><circle cx="74.0" cy="189.9" r="5.4" fill="rgb(158,158,156)"/><circle cx="83.0" cy="189.9" r="5.4" fill="rgb(142,142,140)"/><circle cx="92.0" cy="189.9" r="5.4" fill="rgb(148,148,146)"/><circle cx="101.0" cy="189.9" r="5.4" fill="rgb(142,142,140)"/><circle cx="110.0" cy="189.9" r="5.4" fill="rgb(143,143,141)"/><circle cx="119.0" cy="189.9" r="5.4" fill="rgb(125,125,123)"/><circle cx="128.0" cy="189.9" r="5.4" fill="rgb(134,134,132)"/><circle cx="137.0" cy="189.9" r="5.4" fill="rgb(126,126,124)"/><circle cx="146.0" cy="189.9" r="5.4" fill="rgb(134,134,132)"/><circle cx="155.0" cy="189.9" r="5.4" fill="rgb(150,150,148)"/><circle cx="164.0" cy="189.9" r="5.4" fill="rgb(132,132,130)"/><circle cx="173.0" cy="189.9" r="5.4" fill="rgb(141,141,139)"/><circle cx="182.0" cy="189.9" r="5.4" fill="rgb(133,133,131)"/><circle cx="87.5" cy="197.6" r="5.4" fill="rgb(150,150,148)"/><circle cx="96.5" cy="197.6" r="5.4" fill="rgb(159,159,157)"/><circle cx="105.5" cy="197.6" r="5.4" fill="rgb(159,159,157)"/><circle cx="114.5" cy="197.6" r="5.4" fill="rgb(120,120,118)"/><circle cx="123.5" cy="197.6" r="5.4" fill="rgb(150,150,148)"/><circle cx="132.5" cy="197.6" r="5.4" fill="rgb(161,161,159)"/><circle cx="141.5" cy="197.6" r="5.4" fill="rgb(142,142,140)"/><circle cx="150.5" cy="197.6" r="5.4" fill="rgb(161,161,159)"/><circle cx="159.5" cy="197.6" r="5.4" fill="rgb(125,125,123)"/><circle cx="168.5" cy="197.6" r="5.4" fill="rgb(162,162,160)"/><circle cx="101.0" cy="205.4" r="5.4" fill="rgb(127,127,125)"/><circle cx="110.0" cy="205.4" r="5.4" fill="rgb(144,144,142)"/><circle cx="119.0" cy="205.4" r="5.4" fill="rgb(165,165,163)"/><circle cx="128.0" cy="205.4" r="5.4" fill="rgb(132,132,130)"/><circle cx="137.0" cy="205.4" r="5.4" fill="rgb(150,150,148)"/><circle cx="146.0" cy="205.4" r="5.4" fill="rgb(131,131,129)"/><circle cx="155.0" cy="205.4" r="5.4" fill="rgb(147,147,145)"/></g><circle cx="128" cy="127.5" r="72.5" fill="none" stroke="#6a6a6a" stroke-width="12" opacity="0.22"/><circle cx="128" cy="127.5" r="49" fill="none" stroke="#6a6a6a" stroke-width="11" opacity="0.18"/><circle cx="128" cy="127.5" r="24.5" fill="none" stroke="#6a6a6a" stroke-width="11" opacity="0.15"/><text transform="translate(131.3,55.6) rotate(90)" text-anchor="middle" font-family="Liberation Sans" font-size="15.5" fill="#000" stroke="#000" stroke-width="0.55">54.0</text><text transform="translate(159.4,60.8) rotate(90)" text-anchor="middle" font-family="Liberation Sans" font-size="15.5" fill="#000" stroke="#000" stroke-width="0.55">53.0</text><text transform="translate(182.3,76.5) rotate(90)" text-anchor="middle" font-family="Liberation Sans" font-size="15.5" fill="#000" stroke="#000" stroke-width="0.55">52.0</text><text transform="translate(198.5,99.9) rotate(90)" text-anchor="middle" font-family="Liberation Sans" font-size="15.5" fill="#000" stroke="#000" stroke-width="0.55">48.0</text><text transform="translate(203.7,127.5) rotate(90)" text-anchor="middle" font-family="Liberation Sans" font-size="15.5" fill="#000" stroke="#000" stroke-width="0.55">44.0</text><text transform="translate(198.5,155.6) rotate(90)" text-anchor="middle" font-family="Liberation Sans" font-size="15.5" fill="#000" stroke="#000" stroke-width="0.55">40.0</text><text transform="translate(182.3,178.5) rotate(90)" text-anchor="middle" font-family="Liberation Sans" font-size="15.5" fill="#000" stroke="#000" stroke-width="0.55">36.0</text><text transform="translate(159.4,195.0) rotate(90)" text-anchor="middle" font-family="Liberation Sans" font-size="15.5" fill="#000" stroke="#000" stroke-width="0.55">37.0</text><text transform="translate(131.3,200.0) rotate(90)" text-anchor="middle" font-family="Liberation Sans" font-size="15.5" fill="#000" stroke="#000" stroke-width="0.55">38.0</text><text transform="translate(103.7,195.0) rotate(90)" text-anchor="middle" font-family="Liberation Sans" font-size="15.5" fill="#000" stroke="#000" stroke-width="0.55">39.5</text><text transform="translate(80.5,178.5) rotate(90)" text-anchor="middle" font-family="Liberation Sans" font-size="15.5" fill="#000" stroke="#000" stroke-width="0.55">41.0</text><text transform="translate(64.4,155.6) rotate(90)" text-anchor="middle" font-family="Liberation Sans" font-size="15.5" fill="#000" stroke="#000" stroke-width="0.55">46.0</text><text transform="translate(59.2,127.5) rotate(90)" text-anchor="middle" font-family="Liberation Sans" font-size="15.5" fill="#000" stroke="#000" stroke-width="0.55">51.0</text><text transform="translate(64.4,99.9) rotate(90)" text-anchor="middle" font-family="Liberation Sans" font-size="15.5" fill="#000" stroke="#000" stroke-width="0.55">51.5</text><text transform="translate(80.5,76.5) rotate(90)" text-anchor="middle" font-family="Liberation Sans" font-size="15.5" fill="#000" stroke="#000" stroke-width="0.55">52.0</text><text transform="translate(103.7,60.8) rotate(90)" text-anchor="middle" font-family="Liberation Sans" font-size="15.5" fill="#000" stroke="#000" stroke-width="0.55">53.0</text><text transform="translate(131.3,78.8) rotate(90)" text-anchor="middle" font-family="Liberation Sans" font-size="15.5" fill="#000" stroke="#000" stroke-width="0.55">88.0</text><text transform="translate(150.4,82.6) rotate(90)" text-anchor="middle" font-family="Liberation Sans" font-size="15.5" fill="#000" stroke="#000" stroke-width="0.55">89.5</text><text transform="translate(165.9,93.8) rotate(90)" text-anchor="middle" font-family="Liberation Sans" font-size="15.5" fill="#000" stroke="#000" stroke-width="0.55">91.0</text><text transform="translate(176.7,108.4) rotate(90)" text-anchor="middle" font-family="Liberation Sans" font-size="15.5" fill="#000" stroke="#000" stroke-width="0.55">88.5</text><text transform="translate(180.8,127.5) rotate(90)" text-anchor="middle" font-family="Liberation Sans" font-size="15.5" fill="#000" stroke="#000" stroke-width="0.55">85.0</text><text transform="translate(176.7,146.6) rotate(90)" text-anchor="middle" font-family="Liberation Sans" font-size="15.5" fill="#000" stroke="#000" stroke-width="0.55">83.0</text><text transform="translate(165.9,162.3) rotate(90)" text-anchor="middle" font-family="Liberation Sans" font-size="15.5" fill="#000" stroke="#000" stroke-width="0.55">80.0</text><text transform="translate(150.4,172.9) rotate(90)" text-anchor="middle" font-family="Liberation Sans" font-size="15.5" fill="#000" stroke="#000" stroke-width="0.55">79.0</text><text transform="translate(131.3,176.5) rotate(90)" text-anchor="middle" font-family="Liberation Sans" font-size="15.5" fill="#000" stroke="#000" stroke-width="0.55">78.0</text><text transform="translate(112.2,172.9) rotate(90)" text-anchor="middle" font-family="Liberation Sans" font-size="15.5" fill="#000" stroke="#000" stroke-width="0.55">80.0</text><text transform="translate(96.9,162.3) rotate(90)" text-anchor="middle" font-family="Liberation Sans" font-size="15.5" fill="#000" stroke="#000" stroke-width="0.55">82.0</text><text transform="translate(86.4,146.6) rotate(90)" text-anchor="middle" font-family="Liberation Sans" font-size="15.5" fill="#000" stroke="#000" stroke-width="0.55">83.5</text><text transform="translate(82.3,127.5) rotate(90)" text-anchor="middle" font-family="Liberation Sans" font-size="15.5" fill="#000" stroke="#000" stroke-width="0.55">85.0</text><text transform="translate(86.4,108.4) rotate(90)" text-anchor="middle" font-family="Liberation Sans" font-size="15.5" fill="#000" stroke="#000" stroke-width="0.55">84.0</text><text transform="translate(96.9,93.8) rotate(90)" text-anchor="middle" font-family="Liberation Sans" font-size="15.5" fill="#000" stroke="#000" stroke-width="0.55">84.0</text><text transform="translate(112.2,82.6) rotate(90)" text-anchor="middle" font-family="Liberation Sans" font-size="15.5" fill="#000" stroke="#000" stroke-width="0.55">86.0</text><text transform="translate(131.3,102.8) rotate(90)" text-anchor="middle" font-family="Liberation Sans" font-size="15.5" fill="#000" stroke="#000" stroke-width="0.55">100.0</text><text transform="translate(148.2,110.2) rotate(90)" text-anchor="middle" font-family="Liberation Sans" font-size="15.5" fill="#000" stroke="#000" stroke-width="0.55">102.0</text><text transform="translate(155.8,127.5) rotate(90)" text-anchor="middle" font-family="Liberation Sans" font-size="15.5" fill="#000" stroke="#000" stroke-width="0.55">99.0</text><text transform="translate(148.2,144.8) rotate(90)" text-anchor="middle" font-family="Liberation Sans" font-size="15.5" fill="#000" stroke="#000" stroke-width="0.55">96.0</text><text transform="translate(131.3,152.2) rotate(90)" text-anchor="middle" font-family="Liberation Sans" font-size="15.5" fill="#000" stroke="#000" stroke-width="0.55">94.0</text><text transform="translate(114.5,144.8) rotate(90)" text-anchor="middle" font-family="Liberation Sans" font-size="15.5" fill="#000" stroke="#000" stroke-width="0.55">94.0</text><text transform="translate(107.1,127.5) rotate(90)" text-anchor="middle" font-family="Liberation Sans" font-size="15.5" fill="#000" stroke="#000" stroke-width="0.55">96.0</text><text transform="translate(114.5,110.2) rotate(90)" text-anchor="middle" font-family="Liberation Sans" font-size="15.5" fill="#000" stroke="#000" stroke-width="0.55">97.0</text><text transform="translate(131.3,127.5) rotate(90)" text-anchor="middle" font-family="Liberation Sans" font-size="15.5" fill="#000" stroke="#000" stroke-width="0.55">100.0</text><rect x="125.8" y="53.6" width="4" height="4" fill="#0000c8"/><rect x="153.9" y="58.8" width="4" height="4" fill="#0000c8"/><rect x="176.8" y="74.5" width="4" height="4" fill="#0000c8"/><rect x="193.0" y="97.9" width="4" height="4" fill="#0000c8"/><rect x="198.2" y="125.5" width="4" height="4" fill="#0000c8"/><rect x="193.0" y="153.6" width="4" height="4" fill="#0000c8"/><rect x="176.8" y="176.5" width="4" height="4" fill="#0000c8"/><rect x="153.9" y="193.0" width="4" height="4" fill="#0000c8"/><rect x="125.8" y="198.0" width="4" height="4" fill="#0000c8"/><rect x="98.2" y="193.0" width="4" height="4" fill="#0000c8"/><rect x="75.0" y="176.5" width="4" height="4" fill="#0000c8"/><rect x="58.9" y="153.6" width="4" height="4" fill="#0000c8"/><rect x="53.7" y="125.5" width="4" height="4" fill="#0000c8"/><rect x="58.9" y="97.9" width="4" height="4" fill="#0000c8"/><rect x="75.0" y="74.5" width="4" height="4" fill="#0000c8"/><rect x="98.2" y="58.8" width="4" height="4" fill="#0000c8"/><rect x="125.8" y="76.8" width="4" height="4" fill="#0000c8"/><rect x="144.9" y="80.6" width="4" height="4" fill="#0000c8"/><rect x="160.4" y="91.8" width="4" height="4" fill="#0000c8"/><rect x="171.2" y="106.4" width="4" height="4" fill="#0000c8"/><rect x="175.3" y="125.5" width="4" height="4" fill="#0000c8"/><rect x="171.2" y="144.6" width="4" height="4" fill="#0000c8"/><rect x="160.4" y="160.3" width="4" height="4" fill="#0000c8"/><rect x="144.9" y="170.9" width="4" height="4" fill="#0000c8"/><rect x="125.8" y="174.5" width="4" height="4" fill="#0000c8"/><rect x="106.7" y="170.9" width="4" height="4" fill="#0000c8"/><rect x="91.4" y="160.3" width="4" height="4" fill="#0000c8"/><rect x="80.9" y="144.6" width="4" height="4" fill="#0000c8"/><rect x="76.8" y="125.5" width="4" height="4" fill="#0000c8"/><rect x="80.9" y="106.4" width="4" height="4" fill="#0000c8"/><rect x="91.4" y="91.8" width="4" height="4" fill="#0000c8"/><rect x="106.7" y="80.6" width="4" height="4" fill="#0000c8"/><rect x="125.8" y="100.8" width="4" height="4" fill="#0000c8"/><rect x="142.7" y="108.2" width="4" height="4" fill="#0000c8"/><rect x="150.3" y="125.5" width="4" height="4" fill="#0000c8"/><rect x="142.7" y="142.8" width="4" height="4" fill="#0000c8"/><rect x="125.8" y="150.2" width="4" height="4" fill="#0000c8"/><rect x="109.0" y="142.8" width="4" height="4" fill="#0000c8"/><rect x="101.6" y="125.5" width="4" height="4" fill="#0000c8"/><rect x="109.0" y="108.2" width="4" height="4" fill="#0000c8"/><rect x="125.8" y="125.5" width="4" height="4" fill="#0000c8"/></svg>
<div class="lb" style="left:643px;top:247px;background:#e6fcfc">-0.02</div>
<div class="lb" style="left:586px;top:259px;background:#d0e5e0">-0.46</div>
<div class="lb" style="left:700px;top:259px;background:#d0e5e0">0.79</div>
<div class="lb" style="left:537px;top:291px;background:#e6fcfc">-2.16</div>
<div class="lb" style="left:749px;top:291px;background:#e6fcfc">1.15</div>
<div class="lb" style="left:643px;top:297px;background:#eedfdc">-1.63</div>
<div class="lb" style="left:605px;top:305px;background:#e3cdcb">-1.22</div>
<div class="lb" style="left:681px;top:305px;background:#e3cdcb">-1.31</div>
<div class="lb" style="left:572px;top:327px;background:#eedfdc">-0.55</div>
<div class="lb" style="left:714px;top:327px;background:#eedfdc">-1.59</div>
<div class="lb" style="left:505px;top:340px;background:#d0e5e0">-0.01</div>
<div class="lb" style="left:781px;top:340px;background:#d0e5e0">0.52</div>
<div class="lb" style="left:643px;top:347px;background:#ffffcc">-0.69</div>
<div class="lb" style="left:551px;top:359px;background:#e3cdcb">-1.5</div>
<div class="lb" style="left:735px;top:359px;background:#e3cdcb">-1.53</div>
<div class="lb" style="left:605px;top:363px;background:#ffffcc">-0.44</div>
<div class="lb" style="left:681px;top:363px;background:#ffffcc">-0.93</div>
<div class="lb" style="left:493px;top:397px;background:#e6fcfc">0.61</div>
<div class="lb" style="left:543px;top:397px;background:#eedfdc">-1.96</div>
<div class="lb" style="left:593px;top:397px;background:#ffffcc">-0.25</div>
<div class="lb" style="left:643px;top:397px;background:#ffffff">0</div>
<div class="lb" style="left:693px;top:397px;background:#ffffcc">-0.49</div>
<div class="lb" style="left:743px;top:397px;background:#eedfdc">-1.61</div>
<div class="lb" style="left:793px;top:397px;background:#e6fcfc">-0.33</div>
<div class="lb" style="left:605px;top:431px;background:#ffffcc">-0.15</div>
<div class="lb" style="left:681px;top:431px;background:#ffffcc">-0.62</div>
<div class="lb" style="left:555px;top:437px;background:#e3cdcb">-1.52</div>
<div class="lb" style="left:731px;top:435px;background:#e3cdcb">-2.33</div>
<div class="lb" style="left:643px;top:447px;background:#ffffcc">-0.69</div>
<div class="lb" style="left:505px;top:454px;background:#d0e5e0">0.96</div>
<div class="lb" style="left:781px;top:454px;background:#d0e5e0">2.61</div>
<div class="lb" style="left:572px;top:467px;background:#eedfdc">-1.63</div>
<div class="lb" style="left:714px;top:467px;background:#eedfdc">-2.33</div>
<div class="lb" style="left:605px;top:489px;background:#e3cdcb">-1.5</div>
<div class="lb" style="left:681px;top:489px;background:#e3cdcb">-1.7</div>
<div class="lb" style="left:643px;top:497px;background:#eedfdc">-1</div>
<div class="lb" style="left:537px;top:503px;background:#e6fcfc">2.14</div>
<div class="lb" style="left:749px;top:503px;background:#e6fcfc">7.14</div>
<div class="lb" style="left:586px;top:535px;background:#d0e5e0">1.99</div>
<div class="lb" style="left:700px;top:535px;background:#d0e5e0">4.44</div>
<div class="lb" style="left:643px;top:547px;background:#e6fcfc">2.9</div>
<span id="t38" style="position:absolute;top:398.99px;font-size:11px;line-height:11px;white-space:pre;color:#111;letter-spacing:1.405px;left:836.6px;">&lt;- X</span>
<div class="sbtn" style="left:493px;top:247px;width:55px;height:16px"></div>
<span id="t39" style="position:absolute;top:249.76px;font-size:9.5px;line-height:9.5px;white-space:pre;color:#000;letter-spacing:-0.240px;-webkit-text-stroke:0.08px currentColor;left:506.9px;">Rotate</span>
<div class="sbtn" style="left:772px;top:546px;width:55px;height:16px"></div>
<span id="t40" style="position:absolute;top:548.96px;font-size:9.5px;line-height:9.5px;white-space:pre;color:#000;letter-spacing:0.412px;-webkit-text-stroke:0.08px currentColor;left:783.6px;">Autofill</span>
<span id="t41" style="position:absolute;top:536.39px;font-size:11px;line-height:11px;white-space:pre;color:#000;letter-spacing:0.354px;left:261.8px;">Meas. height:</span>
<div class="tf" style="left:359px;top:532px;width:45px;height:19px"></div>
<span id="t42" style="position:absolute;top:536.39px;font-size:11px;line-height:11px;white-space:pre;color:#000;letter-spacing:0.000px;left:364.6px;">1</span>
<span id="t43" style="position:absolute;top:536.39px;font-size:11px;line-height:11px;white-space:pre;color:#000;letter-spacing:0.516px;left:411.2px;">from surface (mm)</span>
<span id="t44" style="position:absolute;top:558.69px;font-size:11px;line-height:11px;white-space:pre;color:#000;letter-spacing:0.468px;left:90.8px;">Patch lower limit:</span>
<div class="tf" style="left:196px;top:554px;width:45px;height:19px"></div>
<span id="t45" style="position:absolute;top:558.77px;font-size:11.5px;line-height:11.5px;white-space:pre;color:#000;letter-spacing:0.000px;left:200.3px;letter-spacing:0.45px">0.2</span>
<span id="t46" style="position:absolute;top:558.69px;font-size:11px;line-height:11px;white-space:pre;color:#000;letter-spacing:0.545px;left:261.8px;">Innermost ring:</span>
<div class="tf" style="left:359px;top:554px;width:45px;height:19px;background:#ffffc8"></div>
<span id="t47" style="position:absolute;top:558.77px;font-size:11.5px;line-height:11.5px;white-space:pre;color:#000;letter-spacing:0.000px;left:363.5px;letter-spacing:0.45px">2.62</span>
<span id="t48" style="position:absolute;top:558.69px;font-size:11px;line-height:11px;white-space:pre;color:#000;letter-spacing:0.515px;left:411.2px;">diameter (mm)</span>
<span id="t49" style="position:absolute;top:580.69px;font-size:11px;line-height:11px;white-space:pre;color:#000;letter-spacing:0.466px;left:90.8px;">Patch upper limit:</span>
<div class="tf" style="left:196px;top:576px;width:45px;height:19px"></div>
<span id="t50" style="position:absolute;top:580.77px;font-size:11.5px;line-height:11.5px;white-space:pre;color:#000;letter-spacing:0.000px;left:200.3px;letter-spacing:0.45px">2</span>
<span id="t51" style="position:absolute;top:580.69px;font-size:11px;line-height:11px;white-space:pre;color:#000;letter-spacing:0.531px;left:261.8px;">Middle ring:</span>
<div class="tf" style="left:359px;top:576px;width:45px;height:19px;background:#efdfdc"></div>
<span id="t52" style="position:absolute;top:580.77px;font-size:11.5px;line-height:11.5px;white-space:pre;color:#000;letter-spacing:0.000px;left:363.5px;letter-spacing:0.45px">5.19</span>
<span id="t53" style="position:absolute;top:580.69px;font-size:11px;line-height:11px;white-space:pre;color:#000;letter-spacing:0.515px;left:411.2px;">diameter (mm)</span>
<span id="t54" style="position:absolute;top:602.69px;font-size:11px;line-height:11px;white-space:pre;color:#000;letter-spacing:0.359px;left:90.8px;">Iterations:</span>
<div class="tf" style="left:196px;top:598px;width:45px;height:19px"></div>
<span id="t55" style="position:absolute;top:602.77px;font-size:11.5px;line-height:11.5px;white-space:pre;color:#000;letter-spacing:0.000px;left:200.3px;letter-spacing:0.45px">150</span>
<span id="t56" style="position:absolute;top:602.69px;font-size:11px;line-height:11px;white-space:pre;color:#000;letter-spacing:0.528px;left:261.8px;">Outermost ring:</span>
<div class="tf" style="left:359px;top:598px;width:45px;height:19px;background:#e2fdfd"></div>
<span id="t57" style="position:absolute;top:602.77px;font-size:11.5px;line-height:11.5px;white-space:pre;color:#000;letter-spacing:0.000px;left:363.5px;letter-spacing:0.45px">7.7</span>
<span id="t58" style="position:absolute;top:602.69px;font-size:11px;line-height:11px;white-space:pre;color:#000;letter-spacing:0.515px;left:411.2px;">diameter (mm)</span>
<div class="cb" style="left:572px;top:579px"></div>
<svg style="position:absolute;left:569px;top:573px" width="22" height="22"><path d="M6.2 11.5 L10 15.3 L17 4.8" fill="none" stroke="#23232e" stroke-width="2.3" stroke-linecap="round" stroke-linejoin="round"/></svg>
<span id="t59" style="position:absolute;top:580.00px;font-size:13px;line-height:13px;white-space:pre;color:#000;letter-spacing:0.585px;left:590.2px;">Enable nonuniform activity:</span>
<div class="btn" style="left:630px;top:599px;width:69px;height:18px"></div>
<span id="t60" style="position:absolute;top:601.00px;font-size:13px;line-height:13px;white-space:pre;color:#000;letter-spacing:-0.758px;left:649.3px;">Solve</span>
<span id="t61" style="position:absolute;top:602.69px;font-size:11px;line-height:11px;white-space:pre;color:#000;letter-spacing:-0.111px;left:706.5px;">RMS % error:</span>
<span id="t62" style="position:absolute;top:602.69px;font-size:11px;line-height:11px;white-space:pre;color:#000;letter-spacing:0.492px;left:783px;">1.726</span>
<div class="btn" style="left:78px;top:639px;width:80px;height:18px"></div>
<span id="t63" style="position:absolute;top:640.90px;font-size:13px;line-height:13px;white-space:pre;color:#000;letter-spacing:-0.352px;left:92.3px;">Standard</span>
<span id="t64" style="position:absolute;top:640.90px;font-size:13px;line-height:13px;white-space:pre;color:#000;letter-spacing:0.266px;left:164.3px;">Profiles:</span>
<div class="pb" style="left:230px;background:linear-gradient(#8f8f8f,#b9b9b9 50%,#c9c9c9);border-color:#6a6a6a;box-shadow:inset 0 1px 2px rgba(0,0,0,.35)">1</div>
<div class="pb" style="left:255px">2</div>
<div class="pb" style="left:280px">3</div>
<div class="pb" style="left:305px">4</div>
<div class="pb" style="left:330px">5</div>
<div class="pb" style="left:355px">6</div>
<div class="pb" style="left:380px">7</div>
<div class="pb" style="left:405px">8</div>
<div class="pb" style="left:430px">9</div>
<div class="pb" style="left:455px">10</div>
<div class="pb" style="left:480px">11</div>
<div class="pb" style="left:505px">12</div>
<div class="pb" style="left:530px">13</div>
<div class="pb" style="left:555px">14</div>
<div class="pb" style="left:580px">15</div>
<div class="pb" style="left:605px">16</div>
<div class="cb" style="left:638px;top:640px"></div>
<svg style="position:absolute;left:635px;top:634px" width="22" height="22"><path d="M6.2 11.5 L10 15.3 L17 4.8" fill="none" stroke="#23232e" stroke-width="2.3" stroke-linecap="round" stroke-linejoin="round"/></svg>
<span id="t65" style="position:absolute;top:641.50px;font-size:13px;line-height:13px;white-space:pre;color:#000;letter-spacing:0.389px;left:655px;">Semilog</span>
<div class="btn" style="left:757px;top:639px;width:120px;height:18px"></div>
<span id="t66" style="position:absolute;top:641.84px;font-size:12px;line-height:12px;white-space:pre;color:#000;letter-spacing:0.194px;left:778.7px;">Show Profiles</span></body></html>
